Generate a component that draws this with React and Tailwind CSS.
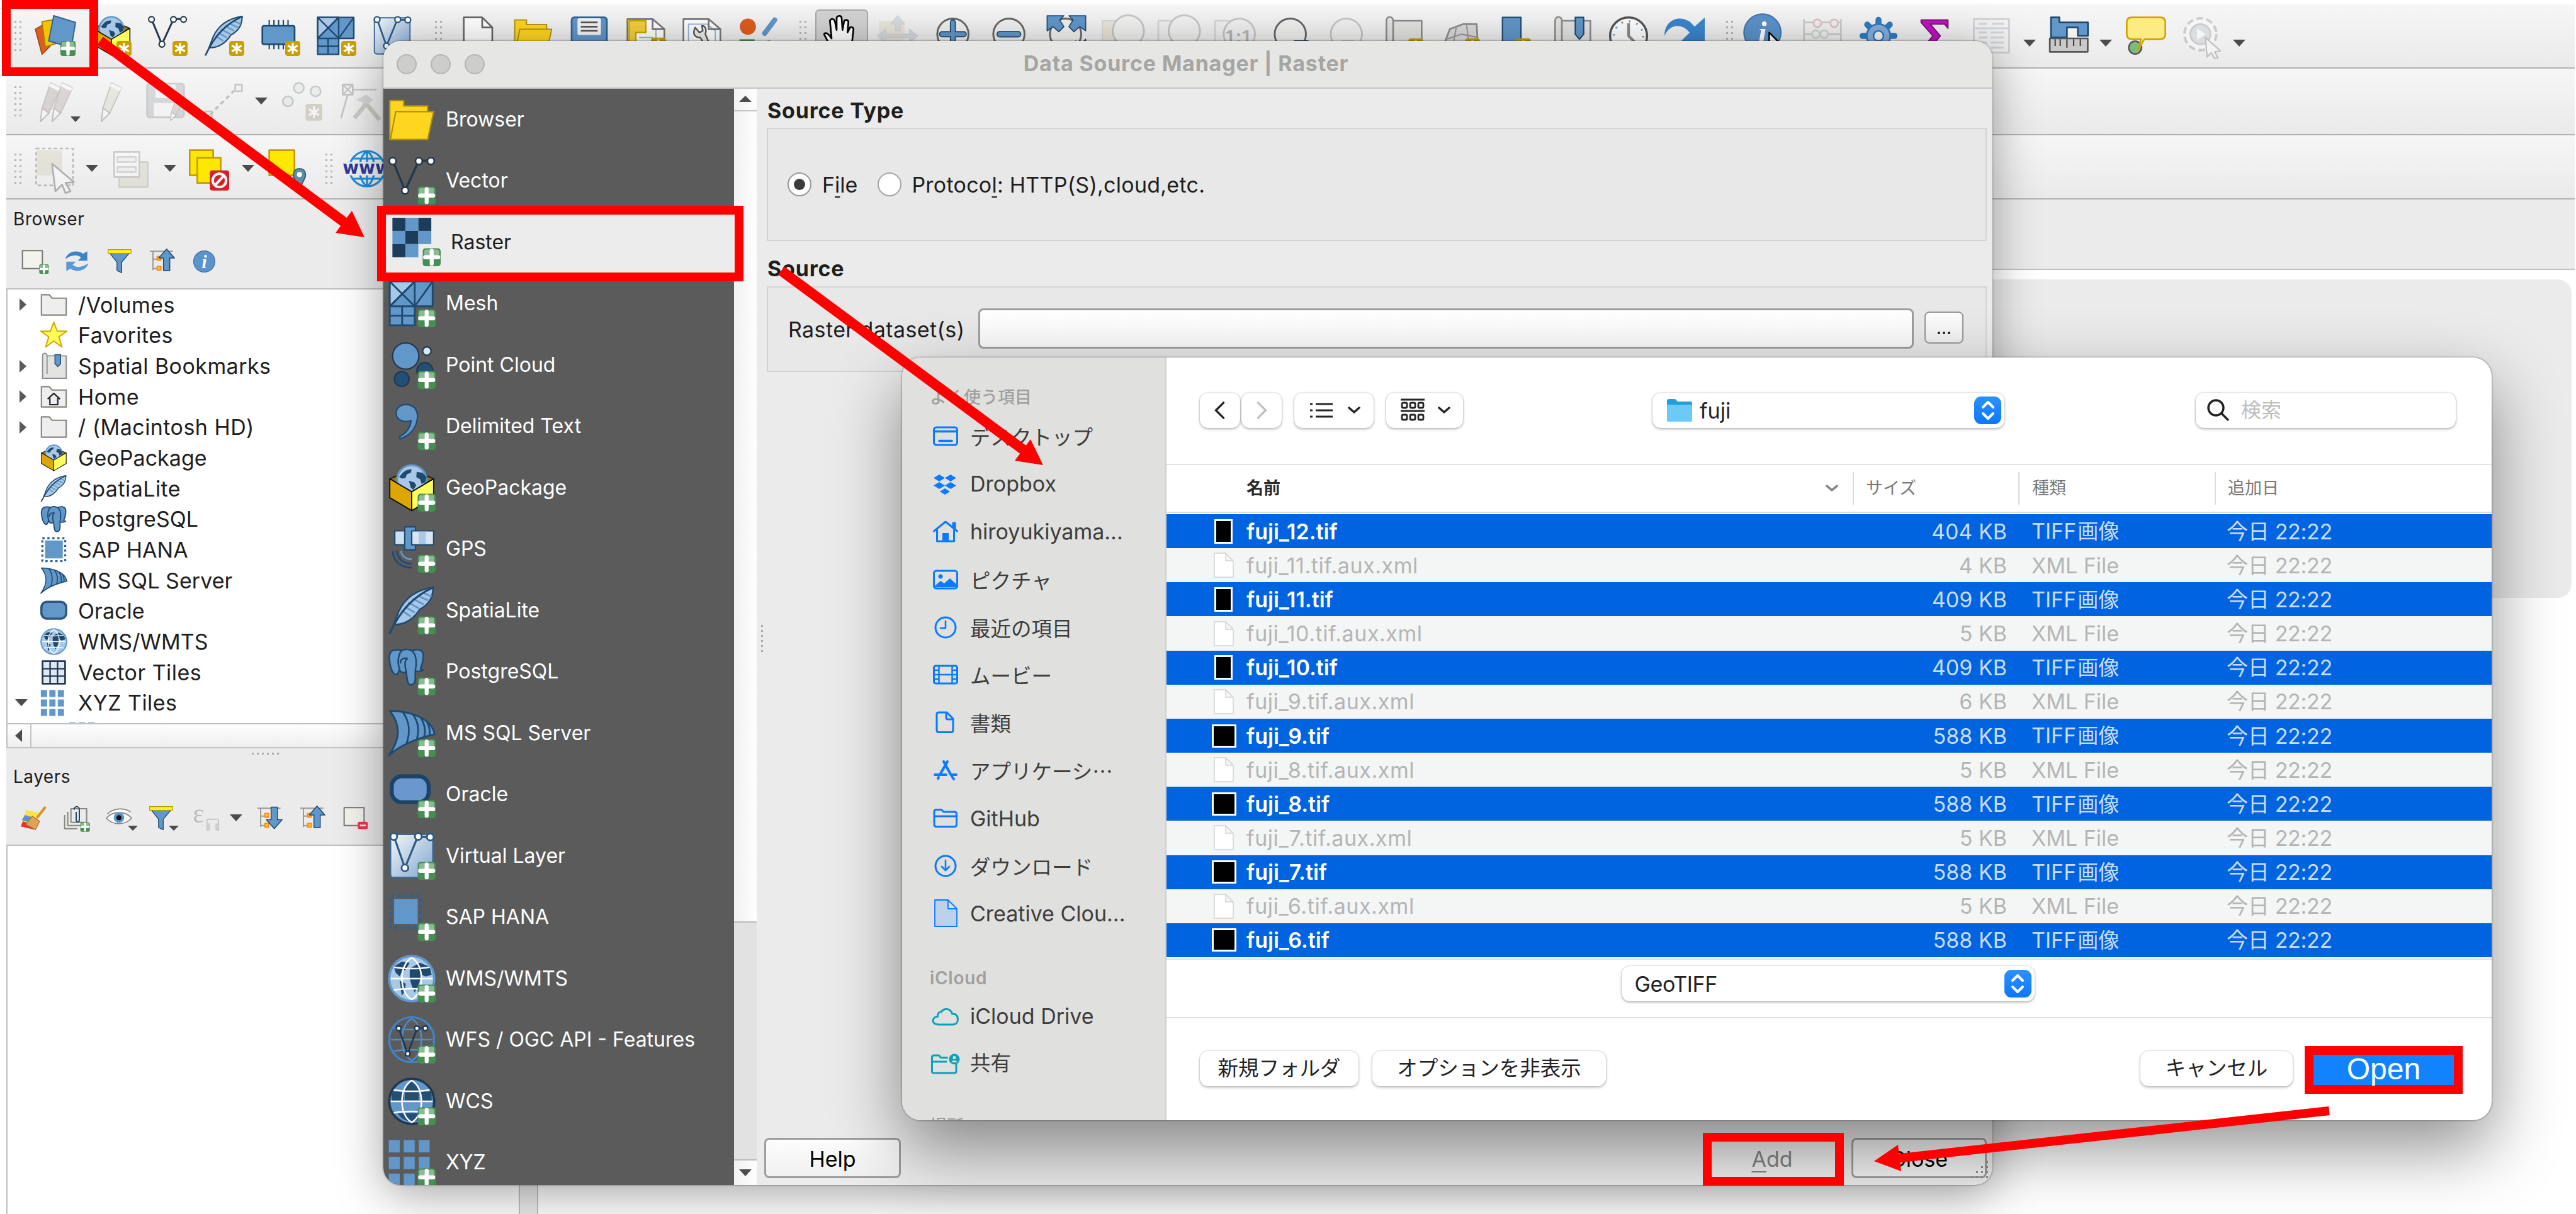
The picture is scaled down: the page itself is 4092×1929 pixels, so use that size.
import React from "react";

/* ---------- colours shared by the icon drawings ---------- */
const M = "#6197c9";
const D = "#1f4a70";
const N = "#22384f";
const Lt = "#a9c8e8";

function Svg({ c = "size-16", f, children }) {
  return (
    <svg viewBox="0 0 24 24" className={"shrink-0 overflow-visible " + c + (f ? " opacity-30" : "")} fill="none" strokeLinejoin="round">
      {children}
    </svg>
  );
}
const Plus = () => (
  <g>
    <rect x="15" y="15" width="9" height="9" rx="1.4" fill="#468e52" />
    <rect x="15.7" y="15.6" width="7.6" height="4" rx="1" fill="#8dba93" />
    <path d="M19.5 16.2v6.6M16.2 19.5h6.6" stroke="#fff" strokeWidth="2" strokeLinecap="round" />
  </g>
);
const Star = () => (
  <g>
    <rect x="15" y="15" width="9" height="9" rx="1.6" fill="#c9a000" />
    <path d="M19.5 16.2v6.6M16.6 17.8l5.8 3.4M22.4 17.8l-5.8 3.4" stroke="#fff" strokeWidth="1.2" />
  </g>
);

/* ---------- data provider glyphs ---------- */
const VectorG = () => (
  <g>
    <path d="M2.5 2L8.7 17L15.6 2H21.6" stroke={N} strokeWidth="1.1" />
    {[[2.5, 2.2], [8.7, 17], [15.6, 2.2], [21.6, 2.2]].map(([x, y]) => (
      <circle key={x} cx={x} cy={y} r="1.7" fill="#fff" stroke={N} strokeWidth=".8" />
    ))}
  </g>
);
const FeatherG = () => (
  <g>
    <path d="M22.8.4C15 1.5 9 5 5.5 12.5L3 19C9 19.5 13.5 15.5 16 11.5 21.5 8.500 22.500 5 22.800.4Z" fill={Lt} stroke={D} strokeWidth=".8" />
    <path d="M7 12l4.500 3M8.500 10l5 3M10.200 8l5.500 3M12.500 6l5.500 3M14.800 4.500l5.500 2.500M17.500 3l4.500 2" stroke={M} strokeWidth=".9" />
    <path d="M22.800.400C13 5 6.500 11.500.800 23.700" stroke={D} strokeWidth="1" />
  </g>
);
const Land = () => (
  <path d="M7.500 4.500c1.500-1.500 3-1.800 4.500-1.600l-.5 1.600-2 .8-.6 1.800-1.700.300-1.500-.8zM10.500 8.500l2.800.8 1 1.500-1.500 2.200-1.400-1.200-.3-1.600zM14.500 4l3 .500 2 2.300-.8 2.500-1.700.800-.8-2.400-1.900-1z" fill={D} />
);
const GeoG = () => (
  <g>
    <path d="M1 7.500L12 3l11 4.500L12 14z" fill="#9a7300" stroke="#222" strokeWidth=".6" />
    <circle cx="12" cy="8" r="7.300" fill={Lt} stroke={M} strokeWidth="1" />
    <Land />
    <path d="M1 7.500L12 14v9.500L1 17z" fill="#dba700" stroke="#111" strokeWidth=".6" />
    <path d="M23 7.500L12 14v9.500L23 17z" fill="#ffff60" stroke="#111" strokeWidth=".6" />
  </g>
);
const ChipG = () => (
  <g>
    <path d="M5.500 2.500v4M8.300 2.500v4M11.100 2.500v4M13.900 2.500v4M16.700 2.500v4M5.500 16v4M8.300 16v4M11.100 16v4M13.900 16v4" stroke={D} strokeWidth=".8" />
    <rect x="1.400" y="6" width="19.200" height="11" rx="1" fill={M} stroke={D} strokeWidth="1" />
  </g>
);
const MeshG = () => (
  <g stroke={D} strokeWidth=".9">
    <path d="M1 1h12.500v12.500H1zM13.500 1h9v12.500h-9zM1 13.500h12.500v9.500H1z" fill={M} />
    <path d="M1 1h12.500L1 13.500z" fill={Lt} />
    <path d="M1 1l12.500 12.500M13.500 1L1 13.500M22.500 1l-9 12.500M7.200 13.500V23M1 18.200h12.500" />
  </g>
);
const VirtG = () => (
  <g>
    <defs>
      <linearGradient id="vg" x1="0" y1="0" x2="1" y2="1">
        <stop offset="0" stopColor="#f4f7fb" />
        <stop offset="1" stopColor="#7fa6d0" />
      </linearGradient>
    </defs>
    <rect x="1.400" y="1.200" width="21.200" height="21.600" rx="1.500" fill="url(#vg)" stroke="#3d6b99" strokeWidth=".7" />
    <path d="M3 2l5.600 16L15 2.400h6" stroke="#2f5a80" strokeWidth="1" />
    {[[3, 2.300], [8.600, 18], [15.300, 2.300], [21.300, 2.500]].map(([x, y]) => (
      <circle key={x} cx={x} cy={y} r="1.700" fill="#fff" stroke="#2f5a80" strokeWidth=".9" />
    ))}
  </g>
);
const RasterG = () => (
  <g>
    {[0, 1, 2, 3, 4, 5, 6, 7].map((i) => (
      <rect key={i} x={-0.200 + (i % 3) * 6.500} y={-0.300 + Math.floor(i / 3) * 6.600} width="6.500" height="6.600" fill={i % 2 ? M : "#1c3c5c"} />
    ))}
  </g>
);
const CloudG = () => (
  <g stroke={N} strokeWidth=".7">
    <circle cx="9" cy="7.500" r="6.600" fill={M} />
    <circle cx="19.600" cy="5" r="2.100" fill="#dbe7f5" />
    <circle cx="18.600" cy="14.800" r="4" fill="#234f77" />
    <circle cx="7" cy="19" r="3.700" fill="#234f77" />
  </g>
);
const CommaG = () => (
  <path d="M9 1.200c3.600 0 6 2.300 5.900 6C14.800 12 12 16.400 6.200 18.400L5.800 17.300c3.400-1.600 5.500-4.300 5.900-8C8 10.500 4.200 9 4.200 5.500 4.200 3 6.300 1.200 9 1.200Z" fill={M} stroke={D} strokeWidth=".7" />
);
const GpsG = () => (
  <g stroke={D} strokeWidth=".7">
    <rect x="3.500" y="3" width="6" height="7" fill="#cfe0f1" />
    <rect x="8.500" y="1" width="5.400" height="11.500" fill={M} />
    <rect x="12" y="3" width="11" height="7" fill="#d9e5f2" />
    <rect x="15.500" y="3.400" width="3.600" height="6.200" fill={Lt} stroke="none" />
    <path d="M2.500 13c0 5 4 8.500 9.500 8.500M4.500 13c.3 4 3.300 6.500 7.500 6.500" stroke={D} strokeWidth=".9" />
    <path d="M6.600 13c.3 2.500 2.300 4.300 5.400 4.300" stroke={M} strokeWidth=".9" />
  </g>
);
const PgG = () => (
  <g fill={M} stroke={D} strokeWidth=".8">
    <path d="M3.500 1.200C1 1.500.500 4 .900 7c.4 3.200 1.600 6.500 3.200 6.500 1.200 0 1.500-2 1.800-3 0 2.200 2.500 2.400 3.300 1.500.5 3 .4 6.500 2 6.600 2.200.2 2.600-1.400 2.600-3.600V11.700c1.200.5 3 .3 3.900-.5-1-.1-1.300-.3-1.300-.6 1-2.300 2-6.800 1-8.400C16 .300 13 1.200 12 1.600 10.500.700 8.500.700 7 1.500 6 1 4.700 1 3.500 1.200Z" />
    <path d="M7 1.500C5 3.500 4.800 8 5.900 10.500M9.200 12C8.500 9 8.300 6 10 5.500M12 1.600c2 1.400 2.800 5 1.800 9.900M10 5.500c-2-.6-4 .5-3.600 2.500" fill="none" />
  </g>
);
const SqlG = () => (
  <g fill={M} stroke={D} strokeWidth=".9">
    <path d="M1 .800C10 .800 22 4 23.500 12.500 15 14.500 6 18 .500 23.300 6.500 14.500 6.500 7.500 1 .800Z" />
    <path d="M7.500 1.300c3.500 5 4 10 1.800 16.200M12.500 2.500c3 4 3.300 8.500 2 12.800M16.500 4.200c2 3 2.500 6.500 1.800 9.700M19.700 6.500c1.200 2 1.500 4.300 1.300 6.500" fill="none" />
  </g>
);
const OracleG = ({ y = 3 }) => <rect x="2" y={y} width="18.500" height="13" rx="5" fill="#6a98ce" stroke="#1d4468" strokeWidth="2" />;
const HanaG = () => (
  <g>
    <rect x="1.400" y="1.400" width="15.200" height="16" stroke="#2f5f8f" strokeWidth="1.400" strokeDasharray="1.500 1.800" />
    <rect x="3.200" y="3" width="11.800" height="12.500" fill={M} />
  </g>
);
const Grat = ({ s = "#fff" }) => (
  <path d="M1.500 12h21M3 6.200c5 1 13 1 18 0M3 17.800c5-1 13-1 18 0M12 1.500C5.500 5 5.500 19 12 22.500 18.500 19 18.500 5 12 1.500" stroke={s} strokeWidth=".8" />
);
const WmsG = () => (
  <g>
    <circle cx="12" cy="12" r="11.300" fill={Lt} stroke={M} strokeWidth="1.200" />
    <path d="M3 6l4-2.500 4 .5-2 3.500-2 1-1 2.500-2-2zM6 13l3 1.500-.5 4-1.500 2zM11 7l5-3 5 2 1 4-3 1-2-1-1.500 5-2 4-1.500-3.500L11 12z" fill={D} />
    <Grat />
  </g>
);
const WfsG = () => (
  <g>
    <circle cx="12" cy="12" r="11.300" stroke="#3f84c8" strokeWidth="1" />
    <Grat s="#4f8cc8" />
    <path d="M5.500 6.300L10 19l4.700-12.700h4" stroke={N} strokeWidth=".9" />
    {[[5.500, 6.300], [10, 19], [14.600, 6.300], [18.800, 6.300]].map(([x, y]) => (
      <circle key={x} cx={x} cy={y} r="1.200" fill="#fff" stroke={N} strokeWidth=".8" />
    ))}
  </g>
);
const WcsG = () => (
  <g>
    <circle cx="12" cy="12" r="11.300" fill={M} stroke={N} strokeWidth="1.200" />
    <path d="M2 7h20v5H2z" fill="#234f77" />
    <path d="M7.600 12h9l-1 6H8.400z" fill={M} />
    <path d="M8 7h8.500v5H8z" fill={M} />
    <path d="M8.500 5.500L12 2l3.500 3.500v6H8.500z" fill="#234f77" />
    <path d="M5 18h14c-2 3-4 4-7 4s-5-1-7-4z" fill="#234f77" />
    <Grat />
  </g>
);
const XyzG = () => (
  <g fill={M}>
    {[0, 1, 2, 3, 4, 5, 6, 7, 8].map((i) => (
      <rect key={i} x={0.500 + (i % 3) * 7.500} y={0.800 + Math.floor(i / 3) * 8.400} width="5.500" height="6.200" />
    ))}
  </g>
);
const FolderG = () => (
  <g fill="#ffd61f" stroke="#b08f10" strokeWidth=".7">
    <path d="M1 2.500h7v2.700h12v5L17 22H1z" />
    <path d="M4 8h19l-3 14H1.300z" />
  </g>
);
const InfoG = () => (
  <g>
    <circle cx="12" cy="12" r="11" fill="#5b93cb" stroke="#3f78b0" strokeWidth=".8" />
    <text x="12" y="18.500" textAnchor="middle" fontSize="19" fontStyle="italic" fontWeight="700" fill="#fff" fontFamily="Liberation Serif, serif">i</text>
  </g>
);
const RefreshG = () => (
  <g fill="#3b82c8">
    <path d="M1 10C3 3 12 .500 18 5l4-2.500v9h-9l3-3C12 5 6 6.500 1 10Z" />
    <path d="M23 14c-2 7-11 9.500-17 5l-4 2.500v-9h9l-3 3c4 3.500 10 2 15-1.500Z" fill="#5a98d6" />
  </g>
);
const FilterG = () => (
  <g>
    <path d="M2 3.500L9.500 13v8l4.500 2v-10L22 3.500z" fill={M} stroke={D} strokeWidth=".8" />
    <path d="M1 1h22v3.500H1z" fill="#ffee20" stroke="#b89d00" strokeWidth=".7" />
  </g>
);
const TreeArrowG = ({ down }) => (
  <g>
    <path d="M0 2.500h22M3 2.500v18M3 10h6M3 19h6" stroke="#999" strokeWidth="1.200" />
    <path d="M7 7.500h3.500V11H7zM7 17h3.500v3.500H7z" fill="#ffd21a" stroke="#ff8c1a" strokeWidth="1.300" />
    {down ? (
      <path d="M13 1.500h6v12h4.500L16 22l-7.500-8.500H13z" fill={M} stroke={D} strokeWidth=".9" />
    ) : (
      <path d="M13 21v-12H8.500L16 .500 23.500 9H19v12z" fill={M} stroke={D} strokeWidth=".9" />
    )}
  </g>
);
const Outline = ({ home }) => (
  <g>
    <path d="M1 3h7l2.500 3H23v15H1z" fill="#eee" stroke="#87877f" strokeWidth="1.200" />
    {home && <path d="M6.500 14L12 9l5.500 5M8.500 13v6h7v-6" stroke="#222" strokeWidth="1.200" />}
  </g>
);
const Mag = ({ children }) => (
  <g>
    <path d="M5 17l-4 6" stroke="#333" strokeWidth="3" />
    <circle cx="11.500" cy="11" r="9.300" fill="#f1f1ef" stroke="#666" strokeWidth="1.100" />
    {children}
  </g>
);
const MapG = () => (
  <path d="M2 23V3c0-3 4-3 4 0h17v20z M6 3v16" fill="#e3e3e1" stroke="#8c8c8a" strokeWidth="1" />
);

/* ---------- toolbar helpers ---------- */
const Slot = ({ w = "w-[89.3px]", f, children }) => (
  <div className={"flex shrink-0 items-center justify-center " + w}>
    <Svg f={f}>{children}</Svg>
  </div>
);
const Grip = ({ m }) => (
  <div className={"grid shrink-0 grid-cols-2 gap-x-[5px] gap-y-[6px] " + m}>
    {[...Array(12)].map((_, i) => (
      <i key={i} className="block size-[3px] bg-[#b5b5b5]" />
    ))}
  </div>
);
const Tri = ({ m = "", s = "border-x-[10px] border-t-[11px]" }) => (
  <i className={"block size-0 shrink-0 border-x-transparent border-t-[#4c4c4c] " + s + " " + m} />
);

function ToolbarTop() {
  return (
    <div className="flex h-[102px] items-center border-b-2 border-[#b2b2b2] bg-linear-to-b from-[#f6f6f6] to-[#eaeaea]">
      <Grip m="ml-[13px]" />
      <div className="ml-[9px] flex">
        <Slot>
          <path d="M0 8l7-4 2 14-5 5z" fill="#d95f20" stroke="#a4400a" strokeWidth=".6" />
          <path d="M4 3.500l12-2v14l-10 3z" fill="#f5c400" stroke="#a98500" strokeWidth=".7" />
          <path d="M11 0l13 4-2.500 15L8 15z" fill={M} stroke="#2e628f" strokeWidth=".7" />
          <Plus />
        </Slot>
        <Slot><GeoG /><Star /></Slot>
        <Slot><VectorG /><Star /></Slot>
        <Slot><FeatherG /><Star /></Slot>
        <Slot><ChipG /><Star /></Slot>
        <Slot><MeshG /><Star /></Slot>
        <Slot><VirtG /></Slot>
      </div>
      <Grip m="ml-[23px]" />
      <div className="ml-[11px] flex">
        <Slot><path d="M4 1h11l6 6v16H4z" fill="#fff" stroke="#666" strokeWidth="1" /><path d="M15 1v6h6" stroke="#666" /></Slot>
        <Slot><FolderG /></Slot>
        <Slot>
          <rect x="1.500" y="1" width="21" height="22" rx="1.500" fill={M} stroke="#2e628f" />
          <rect x="5" y="1.500" width="14" height="10" rx="1" fill="#f3f3f3" />
          <path d="M7 4h10M7 6.500h10M7 9h10" stroke="#555" />
          <rect x="5" y="15" width="14" height="8" fill="#e5eef7" />
        </Slot>
        <Slot>
          <path d="M1 2h15l7 6v16H1z" fill="#fff" stroke="#777" />
          <path d="M2 3h10v7H6v14H2z" fill="#f5cf3a" stroke="#c9a000" strokeWidth=".8" />
          <path d="M8 13h8v8M18 8v8" stroke="#8fb3dd" strokeWidth=".7" />
          <path d="M16 2v6h7" stroke="#777" /><g transform="translate(0 -2)"><Star /></g>
        </Slot>
        <Slot>
          <path d="M1 2h15l7 6v16H1z" fill="#fff" stroke="#777" />
          <path d="M4 5h11l5 4v14H4z" stroke="#8fb3dd" strokeWidth=".7" />
          <path d="M8 7c-2 4 0 6 3 6l5 8 2-1-4-9c1-3 0-5-2-5l.500 3-2 1z" fill="#eee" stroke="#555" strokeWidth=".9" />
          <path d="M16 2v6h7" stroke="#777" />
        </Slot>
        <Slot>
          <circle cx="6" cy="6.500" r="4.800" fill="#dd5d20" />
          <path d="M22 2.500l-6 8" stroke={M} strokeWidth="3" strokeLinecap="round" />
          <path d="M1 14h9v8H1z" fill="#4f9a5b" />
          <path d="M16 18a2.500 2.500 0 1 1 5 0" stroke="#666" strokeWidth="1.500" />
        </Slot>
      </div>
      <Grip m="ml-[21px]" />
      <div className="ml-[11px] flex">
        <div className="flex w-[89.3px] shrink-0 items-center justify-center">
          <div className="flex h-[84px] w-[84px] items-center justify-center rounded-md border-2 border-[#a9a9a9] bg-[#d3d3d3]">
            <Svg>
              <path d="M8 22c-3-4-5-8-6.500-11 1-1.500 3 0 4.500 2.500L5 3c1-2 2.500-1 3 .500l1 5V1c1-1.500 3-1 3 .500l.500 7 1-5.500c1-1 2.500-.5 2.500 1L15.500 10l1.500-3c1-.6 2.200 0 2 1.500L17.500 22z" fill="#fff" stroke="#000" strokeWidth="1" />
            </Svg>
          </div>
        </div>
        <Slot f>
          <path d="M1 3h15v18H1z" fill="#d9cfa0" />
          <path d="M12 0l4 5h-2.500v4h-3V5H8zM12 24l4-5h-2.500v-4h-3v4H8zM0 12l5-4v3h14V8l5 4-5 4v-3H5v3z" fill="#9fa9b5" stroke="#8d97a3" strokeWidth=".6" />
        </Slot>
        <Slot><Mag><path d="M11.500 4v14M5 11h13" stroke={D} strokeWidth="3.600" strokeLinecap="round" /><path d="M11.500 4v14M5 11h13" stroke={M} strokeWidth="2.300" strokeLinecap="round" /></Mag></Slot>
        <Slot><Mag><path d="M6 11h11" stroke={D} strokeWidth="3.800" strokeLinecap="round" /><path d="M6 11h11" stroke={M} strokeWidth="2.500" strokeLinecap="round" /></Mag></Slot>
        <Slot>
          <Mag />
          <path d="M.500 0h10L8 2.500l2.500 4-3 3-3.500-3L.500 9zM23.500 0h-10L16 2.500l-2.500 4 3 3 3.500-3 3.500 2.500zM23.500 24h-9l2-3-2-3 3-3 3 2 3-3z" fill={M} stroke={D} strokeWidth=".6" />
        </Slot>
        <Slot f><path d="M0 3h15v18H0z" fill="#d9cfa0" stroke="#999" strokeWidth=".7" /><g transform="translate(4 -2)"><Mag /></g></Slot>
        <Slot f><path d="M0 3h15v18H0z" fill="#eee" stroke="#999" /><g transform="translate(4 -2)"><Mag /></g></Slot>
        <Slot f>
          <path d="M0 3h15v18H0z" fill="#eee" stroke="#999" /><g transform="translate(3 0)"><Mag /></g>
          <text x="14" y="16" textAnchor="middle" fontSize="11" fontWeight="700" fill="#333" fontFamily="Liberation Sans, sans-serif">1:1</text>
        </Slot>
        <Slot><Mag /><path d="M8 20l6-5h8v8h-8z" fill={M} stroke={D} strokeWidth=".8" /></Slot>
        <Slot f><Mag /><path d="M22 20l-6-5H9v8h7z" fill="#aaa" stroke="#777" strokeWidth=".8" /></Slot>
        <Slot><MapG /><g transform="translate(0 -1.500)"><Star /></g></Slot>
        <Slot><path d="M6 8l8-3h8l1 19H0z" fill="#dadada" stroke="#8c8c8a" /><path d="M4 14l9-3 10 2M10 6l-3 17M16 5l2 18" stroke="#9a9a9a" strokeWidth=".8" /><g transform="translate(0 -1.500)"><Star /></g></Slot>
        <Slot><path d="M4 1h11v22H4z" fill={M} stroke={D} strokeWidth=".8" /><g transform="translate(-3 -1.500)"><Star /></g></Slot>
        <Slot><MapG /><path d="M14 1h5v10l-2.500 3-2.500-3z" fill={M} stroke={D} strokeWidth=".8" /></Slot>
        <Slot>
          <circle cx="12" cy="12" r="11" fill="#fff" stroke="#555" strokeWidth="1.300" />
          <circle cx="12" cy="12" r="8.700" stroke={M} strokeWidth="1.200" strokeDasharray=".9 3.655" />
          <path d="M12 4.500V12l5 5" stroke="#8a8a86" strokeWidth="1.600" />
        </Slot>
        <Slot><path d="M0 12C0 3 8-1 15 3.500l3 3L24 1v14H10l5-5C10 4 3 5 0 12Z" fill="#3b86cf" /><path d="M0 15h10l-3 4 2 4H0z" fill="#5a98d6" /></Slot>
      </div>
      <Grip m="ml-[21px]" />
      <div className="ml-[8px] flex">
        <Slot><g transform="translate(-2 -2)"><InfoG /></g><path d="M14 10l9 9-4 .500 2 4-2 1-2-4-3 3z" fill="#fff" stroke="#000" strokeWidth=".9" /></Slot>
        <Slot f>
          <path d="M1 2v20M23 2v20M1 4h22M1 11h22M1 18h22" stroke="#777" />
          <g fill="#eee" stroke="#a55" strokeWidth="1"><circle cx="9" cy="4.500" r="2.300" /><circle cx="19" cy="4.500" r="2.300" /></g>
          <g fill="#eee" stroke="#797" strokeWidth="1"><circle cx="8" cy="11" r="2.300" /><circle cx="13" cy="11" r="2.300" /></g>
        </Slot>
        <Slot>
          <g stroke="#2f7bbf" strokeWidth="3.600" strokeLinecap="round"><path d="M12 2.500v19M2.500 12h19M5.300 5.300l13.400 13.400M18.700 5.300L5.300 18.700" /></g>
          <circle cx="12" cy="12" r="7" fill="#86aedb" stroke="#2f7bbf" />
          <circle cx="12" cy="12" r="3" fill="#f3f3f3" stroke="#2f7bbf" />
        </Slot>
        <Slot><path d="M4 2.500h16v5l-2-2.500H9.500l6 7-6.500 8h9l2-3v5H4v-1.500L11 12 4 4z" fill="#c210c2" stroke="#72106f" strokeWidth=".7" /></Slot>
        <Slot f>
          <rect x="2" y="2" width="21" height="20" fill="#f2f2f2" stroke="#888" />
          <path d="M2 7.500h21M5 4.800h5M13 4.800h7M5 10h5M12 10h8M5 13h5M12 13h8M5 16h5M12 16h8M5 19h5M12 19h8" stroke="#8a98a8" strokeWidth="1.200" />
        </Slot>
        <Tri m="mt-[38px] ml-[7px] mr-[8px]" />
        <Slot w="w-[88px]">
          <path d="M1.500 1h5v3h17v8h-6V7H11v6H1.500z" fill={M} stroke={D} strokeWidth="1" />
          <rect x=".800" y="13.500" width="22.600" height="8" fill="#c9c9c9" stroke="#555" strokeWidth="1" />
          <path d="M4 14v4M7 14v4M11 14v5M15 14v4M19 14v4" stroke="#444" strokeWidth=".8" />
        </Slot>
        <Tri m="mt-[38px] ml-[5px] mr-[9px]" />
        <Slot>
          <circle cx="5.500" cy="19" r="3.800" fill="#7cba80" stroke="#555" strokeWidth=".9" />
          <path d="M3.500 1h17c2 0 3 1 3 3v7c0 2-1 3-3 3H11l-3.500 6L9 14H3.500c-2 0-3-1-3-3V4c0-2 1-3 3-3Z" fill="#fdec83" stroke="#d0a300" strokeWidth="1" />
        </Slot>
        <Slot f>
          <circle cx="11" cy="11" r="9.500" fill="#fff" stroke="#777" strokeWidth="1.500" strokeDasharray="4 2" />
          <circle cx="11" cy="11" r="6" fill="#aab4bf" stroke="#777" />
          <path d="M9 7.500l5 3.500-5 3.500z" fill="#fff" />
          <path d="M14 13l9 8-3.500.500 2 3.500-2 .500-2-3.500-2.500 2.500z" fill="#fff" stroke="#555" strokeWidth=".8" />
        </Slot>
        <Tri m="mt-[38px] ml-[4px]" />
      </div>
    </div>
  );
}

const Pencil = ({ x, c }) => (
  <g transform={"translate(" + x + " 0)"}>
    <path d="M8 1l6 3-7 15-5 5 1-8z" fill={c} stroke="#666" strokeWidth=".7" />
    <path d="M8 1l6 3-1 2-6-3z" fill="#fff" />
    <path d="M3 16l4 3-5 5z" fill="#fff" stroke="#555" strokeWidth=".7" />
  </g>
);

function ToolbarEdit() {
  return (
    <div className="flex h-[106px] items-center border-b-2 border-[#b2b2b2] bg-linear-to-b from-[#f6f6f6] to-[#eaeaea]">
      <Grip m="ml-[13px]" />
      <div className="ml-[14px] flex">
        <Slot w="w-[86px]" f><Pencil x={0} c="#a58d8d" /><Pencil x={7} c="#a99494" /></Slot>
        <Tri m="mt-[56px] -ml-[22px] mr-[4px]" s="border-x-[8px] border-t-[9px]" />
        <Slot f><Pencil x={4} c="#cfcbb4" /></Slot>
        <Slot w="w-[84px]" f>
          <rect x="1" y="1.500" width="22" height="20" rx="1.500" fill="#97a0aa" stroke="#777" />
          <rect x="6" y="2" width="12" height="8" fill="#fff" /><rect x="5" y="13" width="13" height="8" fill="#fff" />
          <g transform="translate(11 8) scale(.65)"><Pencil x={4} c="#b99" /></g>
        </Slot>
        <Slot w="w-[100px]" f>
          <path d="M4 20L20 4" stroke="#555" strokeWidth="1.300" strokeDasharray="2.500 2" />
          <rect x="1" y="18" width="4" height="4" stroke="#666" /><rect x="19" y="2" width="4" height="4" stroke="#666" />
        </Slot>
        <Tri m="mt-[26px] mr-[9px]" />
        <Slot w="w-[92px]" f>
          <g fill="#ddd" stroke="#5d786b"><circle cx="10" cy="4" r="3" /><circle cx="20" cy="6" r="3" /><circle cx="3.500" cy="12" r="3" /></g>
          <rect x="14" y="13.500" width="10" height="10" rx="1.500" fill="#8d8d6a" />
          <path d="M19 15v7M16 16.700l6 3.600M22 16.700l-6 3.600" stroke="#fff" strokeWidth="1.300" />
        </Slot>
        <Slot f>
          <rect x="2" y="2" width="6" height="6" stroke="#555" /><path d="M2 2l6 6M8 2L2 8M8 5h14M5 8L1 22" stroke="#666" />
          <path d="M9 22l9-11M14 11l10 12" stroke="#77776a" strokeWidth="2.500" /><path d="M10 11l6-3 4 3-3 3z" fill="#999" />
        </Slot>
      </div>
    </div>
  );
}

function ToolbarSelect() {
  return (
    <div className="flex h-[102px] items-center border-b-2 border-[#b2b2b2] bg-linear-to-b from-[#f6f6f6] to-[#eaeaea] pt-[5px]">
      <Grip m="ml-[13px]" />
      <div className="ml-[9px] flex">
        <Slot f>
          <rect x=".500" y="0" width="22" height="22" stroke="#444" strokeDasharray="2 1.500" />
          <rect x="1" y="1" width="15" height="15" fill="#c5c2a3" />
          <path d="M10 9l13 11-5 .500 3 5-3 1-2-5-4 4z" fill="#fff" stroke="#222" />
        </Slot>
        <Tri m="mt-[26px] ml-[4px]" />
        <Slot w="w-[104px]" f>
          <rect x="5" y="8" width="17" height="15" fill="#c5c2a3" stroke="#888" /><rect x="2" y="2" width="15" height="15" fill="#fff" stroke="#777" />
          <path d="M4 5h11v3H4zM4 11h11v3H4z" fill="#eee" stroke="#999" />
        </Slot>
        <Tri m="mt-[26px]" />
        <Slot w="w-[104px]">
          <rect x=".500" y="1" width="14" height="15" fill="#ffe800" stroke="#c79a00" /><rect x="5" y="5.500" width="14" height="15" fill="#ffe800" stroke="#c79a00" />
          <rect x="12.500" y="13" width="11.500" height="12" rx="1.500" fill="#d81f26" /><circle cx="18.200" cy="19" r="4" stroke="#fff" strokeWidth="1.500" /><path d="M15.500 22l5.500-6" stroke="#fff" strokeWidth="1.500" />
        </Slot>
        <Tri m="mt-[26px]" />
        <Slot w="w-[106px]">
          <rect x="1" y="1" width="15" height="15" fill="#ffe800" stroke="#c79a00" />
          <path d="M19 12c4 0 4 4 3 6l-3 6-3-6c-1-2-1-6 3-6Z" fill="#5f8fa8" stroke="#3b6379" strokeWidth=".8" /><circle cx="19" cy="15.500" r="1.500" fill="#fff" />
        </Slot>
      </div>
      <Grip m="ml-[7px]" />
      <div className="ml-[10px] flex">
        <Slot>
          <g stroke="#1c8fe0" strokeWidth="1.200"><circle cx="12" cy="12" r="10.500" /><path d="M12 1.500v21M3.500 6h17M3.500 18h17M12 1.500c-6 4-6 17 0 21M12 1.500c6 4 6 17 0 21" /></g>
          <rect x="0" y="8" width="24" height="8" fill="#f0f0f0" />
          <text x="12" y="15" textAnchor="middle" fontSize="10.500" fontWeight="700" fill="#2c3a9a" fontFamily="DejaVu Sans, sans-serif">www</text>
        </Slot>
      </div>
    </div>
  );
}

/* ---------- docks behind the dialogs ---------- */
const tree = [
  ["r", <Outline />, "/Volumes"],
  ["", <path d="M12 .500l3 8h8.500l-7 5 2.700 9L12 17.300 4.800 22.500l2.700-9-7-5H9z" fill="#ffff5a" stroke="#d6a100" strokeWidth="1.100" />, "Favorites"],
  ["r", <g><MapG /><path d="M13 2h5v8l-2.500 2.500L13 10z" fill={M} stroke={D} strokeWidth=".8" /></g>, "Spatial Bookmarks"],
  ["r", <Outline home />, "Home"],
  ["r", <Outline />, "/ (Macintosh HD)"],
  ["", <GeoG />, "GeoPackage"],
  ["", <FeatherG />, "SpatiaLite"],
  ["", <g transform="scale(1.270 1.250)"><PgG /></g>, "PostgreSQL"],
  ["", <g transform="scale(1.330 1.270)"><HanaG /></g>, "SAP HANA"],
  ["", <SqlG />, "MS SQL Server"],
  ["", <rect x="1" y="4" width="22" height="15" rx="5" fill={M} stroke="#31587c" strokeWidth="2" />, "Oracle"],
  ["", <WmsG />, "WMS/WMTS"],
  ["", <g><rect x="2" y="2" width="20" height="20" fill="#dfe9f4" stroke={N} strokeWidth="1.500" /><path d="M8.700 2v20M15.300 2v20M2 8.700h20M2 15.300h20" stroke={N} strokeWidth="1.300" /></g>, "Vector Tiles"],
  ["d", <XyzG />, "XYZ Tiles"],
];

function Docks() {
  return (
    <div className="flex w-[814px] shrink-0 flex-col bg-[#ebebeb]">
      <div className="flex h-[62px] items-center pl-[11px] text-[28px] tracking-[0.6px]">Browser</div>
      <div className="flex h-[79px] items-center gap-[28px] pb-[7px] pl-[24px]">
        <Svg c="size-[40px]"><rect x="1" y="2" width="19" height="17" fill="#f3f2ec" stroke="#777" strokeWidth="1.200" /><g transform="translate(2 0)"><Plus /></g></Svg>
        <Svg c="size-[40px]"><RefreshG /></Svg>
        <Svg c="size-[40px]"><FilterG /></Svg>
        <Svg c="size-[40px]"><TreeArrowG /></Svg>
        <Svg c="size-[37px]"><InfoG /></Svg>
      </div>
      <div className="h-[693px] overflow-hidden border-y-2 border-l-2 border-[#c0c0c0] bg-white">
        {tree.map(([a, icon, t]) => (
          <div key={t} className="flex h-[48.66px] items-center text-[34px]">
            <div className="flex w-[44px] items-center justify-center">
              {a === "r" && <i className="ml-1 block size-0 border-y-[10px] border-l-[11px] border-y-transparent border-l-[#5a5a5a]" />}
              {a === "d" && <Tri />}
            </div>
            <Svg c="ml-[8px] mr-[17px] size-[43px]">{icon}</Svg>
            <span className={"whitespace-nowrap " + (/^(\/|Spat|Fav|Vec|Home|XYZ)/.test(t) ? "tracking-[0.45px]" : "tracking-[0.05px]")}>{t}</span>
          </div>
        ))}
        <div className="flex items-center gap-[5px] pt-[7px] pl-[98px]">
          {[0, 1, 2].map((i) => <i key={i} className="block h-1 w-[10px] bg-[#6197c9]" />)}
        </div>
      </div>
      <div className="flex h-[38px] items-center border-b-2 border-l-2 border-[#c0c0c0] bg-linear-to-b from-[#fdfdfd] to-[#efefef] pl-3">
        <i className="block size-0 border-y-[10px] border-r-[11px] border-y-transparent border-r-[#4c4c4c]" />
        <i className="ml-[13px] h-full w-[2px] bg-[#c4c4c4]" />
      </div>
      <div className="flex h-[16px] items-center justify-center gap-[5px] pl-[8px]">
        {[0, 1, 2, 3, 4, 5].map((i) => <i key={i} className="block size-[3px] bg-[#aaa]" />)}
      </div>
      <div className="flex h-[60px] items-center pb-[3px] pl-[11px] text-[28px] tracking-[0.5px]">Layers</div>
      <div className="flex h-[79px] items-center border-b-2 border-[#c0c0c0] pb-[8px] pl-[23px]">
        <Svg c="size-[40px]">
          <path d="M0 20L5 4l13 3-4 14z" fill="#ffe24a" /><path d="M1 14l3-5 10 3-2 5z" fill="#5b93cb" /><path d="M0 20l2-5 12 4-1 4z" fill="#f03030" />
          <path d="M23 2l-7 9" stroke="#d8922c" strokeWidth="2.500" strokeLinecap="round" /><path d="M11 10l7 5-4 8-9-5z" fill="#e0a25a" stroke="#a8702a" strokeWidth=".7" />
        </Svg>
        <Svg c="ml-[28px] size-[40px]">
          <path d="M7 3h15v13H7zM4 6v13h12M1 9v13h12" stroke="#87877f" strokeWidth="1.200" /><path d="M10 4c0-4 5-4 5 0v10c0 2-3 2-3 0V6" stroke={D} strokeWidth="1.200" /><g transform="translate(1 1)"><Plus /></g>
        </Svg>
        <Svg c="ml-[28px] size-[40px]">
          <path d="M0 12C6 5 18 5 24 12 18 19 6 19 0 12ZM1 8C7 2 17 2 23 6" fill="#fff" stroke="#888" strokeWidth="1.100" /><circle cx="12" cy="11.500" r="5" fill="#5b93cb" /><circle cx="12" cy="11.500" r="2.400" fill="#111" />
        </Svg>
        <Tri m="-ml-[6px] mt-[32px]" s="border-x-[8px] border-t-[8px]" />
        <Svg c="ml-[17px] size-[40px]"><FilterG /></Svg>
        <Tri m="-ml-[8px] mt-[32px]" s="border-x-[8px] border-t-[8px]" />
        <Svg c="ml-[24px] size-[40px]">
          <text x="-1" y="16" fontSize="26" fill="#bdbdbd" fontFamily="Liberation Serif, serif">ε</text>
          <path d="M12.500 24v-9.500c0-1 .5-1.500 1.500-1.500h8c1 0 1.500.500 1.500 1.500V24" stroke="#c6c6c6" strokeWidth="1.200" />
          <path d="M12.500 17h3v7h-3zM20.500 17h3v7h-3z" fill="#cfcfcf" />
        </Svg>
        <Tri m="ml-[17px]" />
        <Svg c="ml-[24px] size-[40px]"><TreeArrowG down /></Svg>
        <Svg c="ml-[28px] size-[40px]"><TreeArrowG /></Svg>
        <Svg c="ml-[28px] size-[40px]"><rect x="1" y="2" width="19" height="17" fill="#f3f2ec" stroke="#777" strokeWidth="1.200" /><rect x="14" y="15.500" width="9.500" height="7" rx="1.500" fill="#f0344c" /><path d="M16 19h5.500" stroke="#fff" strokeWidth="1.600" /></Svg>
      </div>
      <div className="flex-1 border-l-2 border-[#c0c0c0] bg-white" />
    </div>
  );
}

/* ---------- Data Source Manager ---------- */
const sources = [
  [<FolderG />, "Browser", true],
  [<VectorG />, "Vector"],
  [<RasterG />, "Raster"],
  [<MeshG />, "Mesh"],
  [<CloudG />, "Point Cloud"],
  [<CommaG />, "Delimited Text"],
  [<GeoG />, "GeoPackage"],
  [<GpsG />, "GPS"],
  [<FeatherG />, "SpatiaLite"],
  [<PgG />, "PostgreSQL"],
  [<SqlG />, "MS SQL Server"],
  [<OracleG />, "Oracle"],
  [<VirtG />, "Virtual Layer"],
  [<HanaG />, "SAP HANA"],
  [<WmsG />, "WMS/WMTS"],
  [<WfsG />, "WFS / OGC API - Features"],
  [<WcsG />, "WCS"],
  [<XyzG />, "XYZ"],
];

function Manager() {
  return (
    <div className="absolute top-[65px] left-[609px] flex h-[1818px] w-[2556px] flex-col overflow-hidden rounded-[28px] bg-[#ebebeb] shadow-[0_0_3px_rgba(0,0,0,0.55),0_14px_75px_rgba(0,0,0,0.36)]">
      <div className="flex h-[76px] shrink-0 items-center border-b-2 border-[#c6c6c4] bg-[#e6e6e4]">
        <div className="flex gap-[22px] pl-[21px]">
          {[0, 1, 2].map((i) => <i key={i} className="block size-8 rounded-full border-2 border-[#b5b5b3] bg-[#cdcdcb]" />)}
        </div>
        <div className="flex-1 pr-[167px] pb-[3px] text-center text-[34px] font-bold tracking-[0.8px] text-[#a5a5a3]">Data Source Manager | Raster</div>
      </div>
      <div className="flex flex-1">
        <div className="h-[1742px] w-[557px] shrink-0 overflow-hidden bg-[#5b5b5b]">
          {sources.map(([icon, t, plain], i) => (
            <div key={t} className={"flex h-[97.5px] items-center text-[32px] " + (i === 2 ? "bg-[#ececec] pl-[15px] text-[#1e1e1e]" : "pl-[7px] text-white")}>
              <Svg c="mr-[16px] size-[76px]">{icon}{!plain && <Plus />}</Svg>
              <span>{t}</span>
            </div>
          ))}
        </div>
        <div className="flex w-[36px] shrink-0 flex-col items-center bg-linear-to-r from-[#f1f1f1] to-[#fefefe]">
          <i className="mt-[11px] block size-0 border-x-[10px] border-b-[10px] border-x-transparent border-b-[#4c4c4c]" />
          <i className="mt-[13px] h-[2px] w-full bg-[#c4c4c4]" />
          <div className="mt-[1287px] h-[380px] w-full border-y-2 border-[#bcbcbc] bg-[#e2e2e2]" />
          <Tri m="mt-[14px]" />
        </div>
        <div className="flex w-[16px] shrink-0 flex-col items-center gap-[5px] pt-[852px]">
          {[0, 1, 2, 3, 4, 5].map((i) => <i key={i} className="block size-[3px] bg-[#aaa]" />)}
        </div>
        <div className="flex flex-1 flex-col pr-[9px] text-[34px] text-[#1e1e1e]">
          <div className="flex h-[62px] items-center pt-[6px] pl-[1px] font-bold tracking-[0.8px]">Source Type</div>
          <div className="flex h-[180px] items-center border-2 border-[#d3d3d3] bg-[#e8e8e8] pl-[31px]">
            <i className="flex size-[38px] items-center justify-center rounded-full border-2 border-[#999] bg-white"><i className="block size-[18px] rounded-full bg-[#3c3c3c]" /></i>
            <span className="ml-[17px]">F<u className="decoration-2 underline-offset-[6px]">i</u>le</span>
            <i className="ml-[32px] block size-[38px] rounded-full border-2 border-[#a5a5a5] bg-white" />
            <span className="ml-[16px] tracking-[0.25px]">Protoco<u className="decoration-2 underline-offset-[6px]">l</u>: HTTP(S),cloud,etc.</span>
          </div>
          <div className="flex h-[72px] items-center pt-[14px] pl-[1px] font-bold tracking-[0.8px]">Source</div>
          <div className="flex h-[136px] items-start border-2 border-[#d3d3d3] bg-[#e8e8e8] pt-[33px] pl-[32px]">
            <span className="mt-[8px] w-[282px] tracking-[0.4px]">Raster dataset(s)</span>
            <div className="ml-[20px] h-[64px] w-[1486px] rounded-lg border-[3px] border-[#9d9d9d] bg-linear-to-b from-white to-[#f7f7f7]" />
            <div className="mt-[5px] ml-[17px] flex h-[51px] w-[62px] items-end justify-center gap-[4px] rounded-lg border-2 border-[#999] bg-linear-to-b from-[#fdfdfd] to-[#efefef] pb-[13px]">
              {[0, 1, 2].map((i) => <i key={i} className="block size-[4px] rounded-full bg-[#111]" />)}
            </div>
          </div>
          <div className="mt-auto mb-[11px] -ml-[4px] flex text-black">
            <div className="flex h-[64px] w-[217px] items-center justify-center rounded-lg border-[3px] border-[#9d9d9d] bg-linear-to-b from-[#fdfdfd] to-[#f0f0f0] pt-[2px]">Help</div>
            <div className="ml-[1281px] flex h-[64px] w-[211px] items-center justify-center rounded-lg bg-[#f0f0f0] pt-[2px] pr-[5px] text-[#858585]"><span><u className="decoration-2 underline-offset-[7px]">A</u>dd</span></div>
            <div className="ml-[18px] flex h-[64px] w-[215px] items-center justify-center rounded-lg border-[3px] border-[#9d9d9d] bg-[#f3f3f3] pt-[2px]">Close</div>
          </div>
        </div>
      </div>
      <svg className="absolute right-[4px] bottom-[10px] size-[36px]" viewBox="0 0 36 36" fill="#8f8f8f">
        {[[30, 8], [22, 16], [30, 16], [14, 24], [22, 24], [30, 24], [6, 32], [14, 32], [22, 32], [30, 32]].map(([x, y]) => (
          <rect key={x + "-" + y} x={x} y={y} width="3" height="3" />
        ))}
      </svg>
    </div>
  );
}

/* ---------- file picker ---------- */
const B = "#0a7aff";
const T = "#0aa2b8";
const P = ({ children, c = B }) => (
  <svg viewBox="0 0 40 40" className="mr-[19px] size-10 shrink-0 overflow-visible" fill="none" stroke={c} strokeWidth="3" strokeLinejoin="round" strokeLinecap="round">{children}</svg>
);
const places = [
  [<P><rect x="1.500" y="6" width="37" height="28" rx="4" /><path d="M2 12.500h36M10 27.500h20" strokeWidth="3.500" /></P>, "デスクトップ"],
  [<P><path d="M10 5l9 5.500-9 5.500-9-5.500zM28 5l9 5.500-9 5.500-9-5.500zM10 17l9 5.500-9 5.500-9-5.500zM28 17l9 5.500-9 5.500-9-5.500zM19 27l8 5-8 5-8-5z" fill={B} stroke="none" /></P>, "Dropbox"],
  [<P><path d="M1.500 19L20 4l18.500 15M6.500 17v18h27V17M32 12V6h3v9" /><path d="M15 35V22h10v13z" fill={B} stroke="none" /></P>, "hiroyukiyama..."],
  [<P><rect x="1.500" y="6" width="37" height="28" rx="4" /><circle cx="12" cy="15" r="3.500" fill={B} stroke="none" /><path d="M3 30l9-8 6 4 9-8 11 10v4H4z" fill={B} stroke="none" /></P>, "ピクチャ"],
  [<P><circle cx="20" cy="20" r="16" /><path d="M20 10v11h-8" strokeWidth="2.600" /></P>, "最近の項目"],
  [<P><rect x="1.500" y="6" width="37" height="28" rx="3" /><path d="M9.500 6v28M30.500 6v28M9.500 20h21M3 13h6M3 20h6M3 27h6M31 13h6M31 20h6M31 27h6" strokeWidth="2.500" /></P>, "ムービー"],
  [<P><path d="M9 4h13l10 10v18c0 2-1 3.500-3.500 3.500h-19C7 35.500 6 34 6 32V7.500C6 5 7 4 9 4ZM21 4v8c0 2 1 3 3 3h8" /></P>, "書類"],
  [<P><path d="M17 6l12 22M23 6L11 27M3 27h18M29 27h8M8 33l1-2M31 31l2 3" strokeWidth="4" /></P>, "アプリケーシ…"],
  [<P><path d="M2 30V10c0-2 1-3.500 3.500-3.500h8L17 10h17c2 0 3.500 1 3.500 3.500V30c0 2-1 3.500-3.500 3.500H5.500C3 33.500 2 32 2 30ZM2 17h35.500" /></P>, "GitHub"],
  [<P><circle cx="20" cy="20" r="16" /><path d="M20 11v16M14 21l6 6 6-6" strokeWidth="2.600" /></P>, "ダウンロード"],
  [<P><path d="M3-2h21l14 14v28H3zM24-2v14h14" fill="#bcd2ea" strokeWidth="1.800" /></P>, "Creative Clou..."],
];

const files = [
  ["fuji_12.tif", "404", 1], ["fuji_11.tif.aux.xml", "4", 0], ["fuji_11.tif", "409", 1], ["fuji_10.tif.aux.xml", "5", 0],
  ["fuji_10.tif", "409", 1], ["fuji_9.tif.aux.xml", "6", 0], ["fuji_9.tif", "588", 2], ["fuji_8.tif.aux.xml", "5", 0],
  ["fuji_8.tif", "588", 2], ["fuji_7.tif.aux.xml", "5", 0], ["fuji_7.tif", "588", 2], ["fuji_6.tif.aux.xml", "5", 0], ["fuji_6.tif", "588", 2],
];

const btn = "flex h-[56px] shrink-0 items-center rounded-[13px] bg-white shadow-[0_0_2px_rgba(0,0,0,0.3),0_2px_4px_rgba(0,0,0,0.25)] ";
const Chev = ({ c = "#262626" }) => (
  <svg viewBox="0 0 20 12" className="h-3 w-5" fill="none" stroke={c} strokeWidth="3.500" strokeLinecap="round" strokeLinejoin="round"><path d="M2 2l8 7 8-7" /></svg>
);
const Stepper = () => (
  <div className="flex h-[44px] w-[43px] items-center justify-center rounded-[11px] bg-linear-to-b from-[#2a91ff] to-[#0a78fb]">
    <svg viewBox="0 0 24 32" className="h-8 w-6" fill="none" stroke="#fff" strokeWidth="4" strokeLinecap="round" strokeLinejoin="round"><path d="M4 11l8-8 8 8M4 21l8 8 8-8" /></svg>
  </div>
);
const Rows = () => (
  <svg viewBox="0 0 38 38" className="size-[38px]" fill="none" stroke="#262626" strokeWidth="2.800">
    <path d="M0 2h38M0 20h38" />
    {[2, 15, 28].map((x) => <g key={x}><rect x={x} y="7" width="8" height="8" rx="2" /><rect x={x} y="26" width="8" height="8" rx="2" /></g>)}
  </svg>
);

function Picker() {
  return (
    <div className="absolute top-[568px] left-[1433px] flex h-[1212px] w-[2525px] overflow-hidden rounded-[30px] bg-white shadow-[0_0_3px_rgba(0,0,0,0.6),0_44px_110px_rgba(0,0,0,0.44)]">
      <div className="w-[420px] shrink-0 border-r-2 border-[#cfcfcd] bg-[#e0e0de] pt-[41px] text-[34px] text-[#3d3d3d]">
        <div className="flex h-[46px] items-center pl-[44px] text-[27px] font-medium text-[#a0a09e]">よく使う項目</div>
        {places.map(([icon, t]) => (
          <div key={t} className="flex h-[75.9px] items-center pl-[49px]">
            {icon}
            <span className={/^[A-Za-z]/.test(t) ? "text-[34px]" : "font-['Noto_Sans_CJK_JP',sans-serif] text-[32.5px] leading-[48px]"}>{t}</span>
          </div>
        ))}
        <div className="mt-[41px] flex h-[46px] items-center pl-[44px] text-[28px] font-semibold tracking-[0.7px] text-[#a0a09e]">iCloud</div>
        <div className="flex h-[76px] items-center pl-[49px]">
          <P c={T}><path d="M9 33C2 33-1 29 .500 25 1.500 21.500 5 20 7.500 20.500 7 15 10 12.500 13.500 13 16 7 28 6 30.500 16c6-.5 9 3 9 8.500 0 5-3 8.500-8 8.500z" /></P>iCloud Drive
        </div>
        <div className="flex h-[76px] items-center pl-[49px]">
          <P c={T}><path d="M37 20v11c0 2-1 3-3 3H1c-1.500 0-2.500-1-2.500-3V9c0-2 1-3 3-3h8l3 3.500h10M-1 16h22" /><circle cx="34" cy="12" r="8.500" fill={T} stroke="none" /><circle cx="34" cy="9.500" r="2.500" fill="#e0e0de" stroke="none" /><path d="M29.500 17c1-4 8-4 9 0z" fill="#e0e0de" stroke="none" /></P>
          <span className="text-[32.5px]">共有</span>
        </div>
        <div className="mt-[40px] pl-[44px] text-[27px] leading-[42px] font-medium text-[#a0a09e]">場所</div>
      </div>
      <div className="flex flex-1 flex-col">
        <div className="flex h-[171px] shrink-0 items-start border-b-2 border-[#e2e2e2] pt-[56px] pl-[53px]">
          <div className={btn + "w-[64px] justify-center"}><svg viewBox="0 0 20 32" className="h-[30px] w-5" fill="none" stroke="#222" strokeWidth="3.500" strokeLinecap="round"><path d="M16 3L3 16l13 13" /></svg></div>
          <div className={btn + "ml-[2px] w-[64px] justify-center"}><svg viewBox="0 0 20 32" className="h-[30px] w-5" fill="none" stroke="#c0c0c0" strokeWidth="3.500" strokeLinecap="round"><path d="M4 3l13 13L4 29" /></svg></div>
          <div className={btn + "ml-[20px] w-[126px] justify-center gap-[24px] pl-1"}>
            <svg viewBox="0 0 36 28" className="h-7 w-9" stroke="#262626" strokeWidth="3"><path d="M9 4h27M9 14h27M9 24h27M0 4h4M0 14h4M0 24h4" /></svg><Chev />
          </div>
          <div className={btn + "ml-[20px] w-[122px] justify-center gap-[21px] pl-[3px]"}><Rows /><Chev /></div>
          <div className={btn + "ml-[301px] w-[559px] pr-[5px] pl-[22px]"}>
            <svg viewBox="0 0 42 38" className="mr-[11px] h-[38px] w-[42px]"><path d="M1 4c0-2 1-3 3-3h10l4 4h20c2 0 3 1 3 3v26c0 2-1 3-3 3H4c-2 0-3-1-3-3z" fill="#1fa0dc" /><path d="M1 10h40v24c0 2-1 3-3 3H4c-2 0-3-1-3-3z" fill="#6ccaf8" /></svg>
            <span className="flex-1 text-[34px] text-[#222]">fuji</span><Stepper />
          </div>
          <div className={btn + "ml-[304px] w-[413px] pl-[18px] text-[32px] text-[#bdbdbd]"}>
            <svg viewBox="0 0 36 36" className="mr-[18px] size-9" fill="none" stroke="#222" strokeWidth="3.400" strokeLinecap="round"><circle cx="14" cy="14" r="12" /><path d="M23 23l10 10" /></svg>検索
          </div>
        </div>
        <div className="flex h-[76px] shrink-0 items-center border-b-2 border-[#dcdcdc] text-[27px] text-[#787878]">
          <div className="flex w-[1090px] items-center justify-between pr-[23px] pl-[127px] font-semibold text-[#2a2a2a]">名前<Chev c="#808080" /></div>
          <div className="flex h-[52px] w-[263px] items-center border-l-2 border-[#dcdcdc] pl-[19px]">サイズ</div>
          <div className="flex h-[52px] w-[312px] items-center border-l-2 border-[#dcdcdc] pl-[20px]">種類</div>
          <div className="flex h-[52px] flex-1 items-center border-l-2 border-[#dcdcdc] pl-[19px]">追加日</div>
        </div>
        <div className="mt-[2px] shrink-0">
          {files.map(([n, k, sel]) => (
            <div key={n} className={"flex h-[54.17px] items-center text-[34px] whitespace-nowrap " + (sel ? "bg-[#0064e1] text-[#c9dcf8]" : "bg-[#f4f5f5] text-[#b3b5b5]")}>
              <div className="flex w-[127px] shrink-0 items-center pl-[72px]">
                {sel === 1 && <i className="ml-[4px] block h-[39px] w-[29px] border-[3px] border-white bg-black" />}
                {sel === 2 && <i className="block h-[37px] w-[39px] border-[3px] border-white bg-black" />}
                {!sel && <svg viewBox="0 0 32 40" className="ml-[3px] h-10 w-8" fill="#fff" stroke="#d2d2d2" strokeWidth="1.500"><path d="M1 1h18l12 12v26H1zM19 1v12h12" /></svg>}
              </div>
              <div className={"w-[870px] " + (sel ? "font-semibold text-white" : "tracking-[0.55px]")}>{n}</div>
              <div className="w-[338px] text-right">{k} KB</div>
              <div className="ml-[39px] w-[310px]">{sel ? <>TIFF<span className="ml-[2px] text-[33px]">画像</span></> : "XML File"}</div>
              <div className="tracking-[-0.3px]">今日 22:22</div>
            </div>
          ))}
        </div>
        <div className="mt-[2px] flex h-[95px] shrink-0 items-start justify-center border-y-2 border-[#e0e0e0] pt-[10px] pr-[4px]">
          <div className={btn + "w-[656px] pr-[5px] pl-[21px] text-[34px] text-[#222]"}><span className="flex-1 tracking-[-0.4px]">GeoTIFF</span><Stepper /></div>
        </div>
        <div className="flex items-start pt-[52px] pl-[53px] text-[32.5px] text-[#222]">
          <div className={btn + "w-[252px] justify-center"}>新規フォルダ</div>
          <div className={btn + "ml-[22px] w-[371px] justify-center"}>オプションを非表示</div>
          <div className={btn + "ml-[849px] w-[242px] justify-center"}>キャンセル</div>
          <div className="-mt-[8px] ml-[19px] flex h-[76px] w-[251px] items-center justify-center border-[14px] border-[#ff0000] bg-[#1283ff] pb-[2px] font-['Liberation_Sans',Arial,sans-serif] text-[48px] leading-none text-white">Open</div>
        </div>
      </div>
    </div>
  );
}

export default function App() {
  return (
    <div className="relative h-[1929px] w-[4092px] overflow-hidden bg-white font-['Inter','Noto_Sans_CJK_JP',sans-serif] text-[#1e1e1e]">
      <div className="flex h-full flex-col pt-[7px] pr-[2px] pl-[10px]">
        <ToolbarTop />
        <ToolbarEdit />
        <ToolbarSelect />
        <div className="flex flex-1">
          <Docks />
          <div className="w-[31px] shrink-0 border-x-2 border-[#c0c0c0] bg-[#ebebeb]" />
          <div className="flex-1">
            <div className="h-[112px] border-b-2 border-[#c0c0c0] bg-[#ebebeb]" />
            <div className="mt-[15px] mr-[5px] h-[506px] rounded-[22px] bg-[#ebebeb]" />
          </div>
        </div>
      </div>

      <Manager />
      <Picker />

      {/* callouts */}
      <div className="absolute top-0 left-[3px] h-[121px] w-[153px] border-[14px] border-[#ff0000]" />
      <div className="absolute top-[327px] left-[599px] h-[120px] w-[582px] border-[14px] border-[#ff0000]" />
      <div className="absolute top-[1800px] left-[2705px] h-[84px] w-[224px] border-[14px] border-[#ff0000]" />
      <svg className="pointer-events-none absolute inset-0 h-[1929px] w-[4092px]" viewBox="0 0 4092 1929" fill="#ff0000" stroke="#ff0000" strokeWidth="16">
        <path d="M159 65L552 357" />
        <path d="M579 377L533 370L559 335Z" stroke="none" />
        <path d="M1241 430L1630 718" />
        <path d="M1657 739L1612 732L1637 698Z" stroke="none" />
        <path d="M3700 1765L3010 1841" strokeWidth="14" />
        <path d="M2977 1845L3015 1819L3020 1861Z" stroke="none" />
      </svg>
    </div>
  );
}
